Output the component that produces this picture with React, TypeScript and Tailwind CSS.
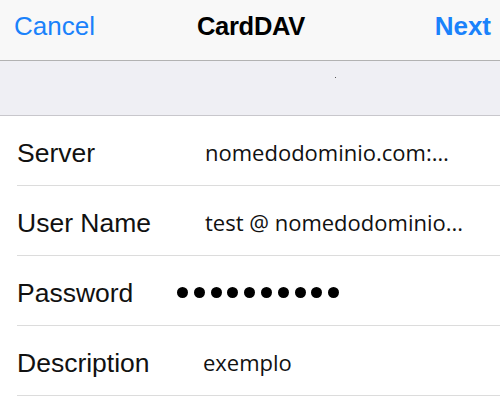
import React from "react";

const rows = [
  { label: "Server", value: "nomedodominio.com:…", vx: "pl-[205px]" },
  { label: "User Name", value: "test @ nomedodominio...", vx: "pl-[205px]" },
  { label: "Password", value: "", vx: "pl-[177px]", dots: true },
  { label: "Description", value: "exemplo", vx: "pl-[203px]" },
];

export default function App() {
  return (
    <div className="w-[500px] h-[396px] overflow-hidden bg-white" style={{ fontFamily: '"Liberation Sans", Arial, sans-serif' }}>
      <div className="h-[61px] bg-[#f8f8f8] border-b border-[#b2b2b2] flex items-start pt-[8px] px-[14px] relative">
        <span className="text-[26px] leading-[36px] text-[#1a82fb]">Cancel</span>
        <span className="absolute left-[197px] top-[8px] text-[25.5px] leading-[36px] font-bold text-black tracking-[-0.3px]">CardDAV</span>
        <span className="ml-auto mr-[-5px] text-[26px] leading-[36px] font-bold text-[#1a82fb]">Next</span>
      </div>
      <div className="h-[55px] bg-[#efeff4] border-b border-[#c8c7cc] relative">
        <span className="absolute left-[335px] top-[16px] w-[1px] h-[1px] bg-[#555]" />
      </div>
      <div className="pl-[17px]">
        {rows.map((r) => (
          <div key={r.label} className="h-[70px] border-b border-[#dcdcdc] relative flex items-center">
            <span className="text-[26.5px] leading-none text-[#111] w-0 whitespace-nowrap pt-[5px]">{r.label}</span>
            <div className={`absolute left-0 top-0 h-full flex items-center ${r.vx} ml-[-17px]`}>
              {r.dots ? (
                <div className="flex gap-[5.8px] pt-[4px]">
                  {Array.from({ length: 10 }).map((_, i) => (
                    <span key={i} className="w-[11px] h-[11px] rounded-full bg-black" />
                  ))}
                </div>
              ) : (
                <span className="text-[22px] leading-none text-[#111] whitespace-nowrap pt-[2px]" style={{ fontFamily: '"Open Sans", sans-serif' }}>{r.value}</span>
              )}
            </div>
          </div>
        ))}
      </div>
    </div>
  );
}
